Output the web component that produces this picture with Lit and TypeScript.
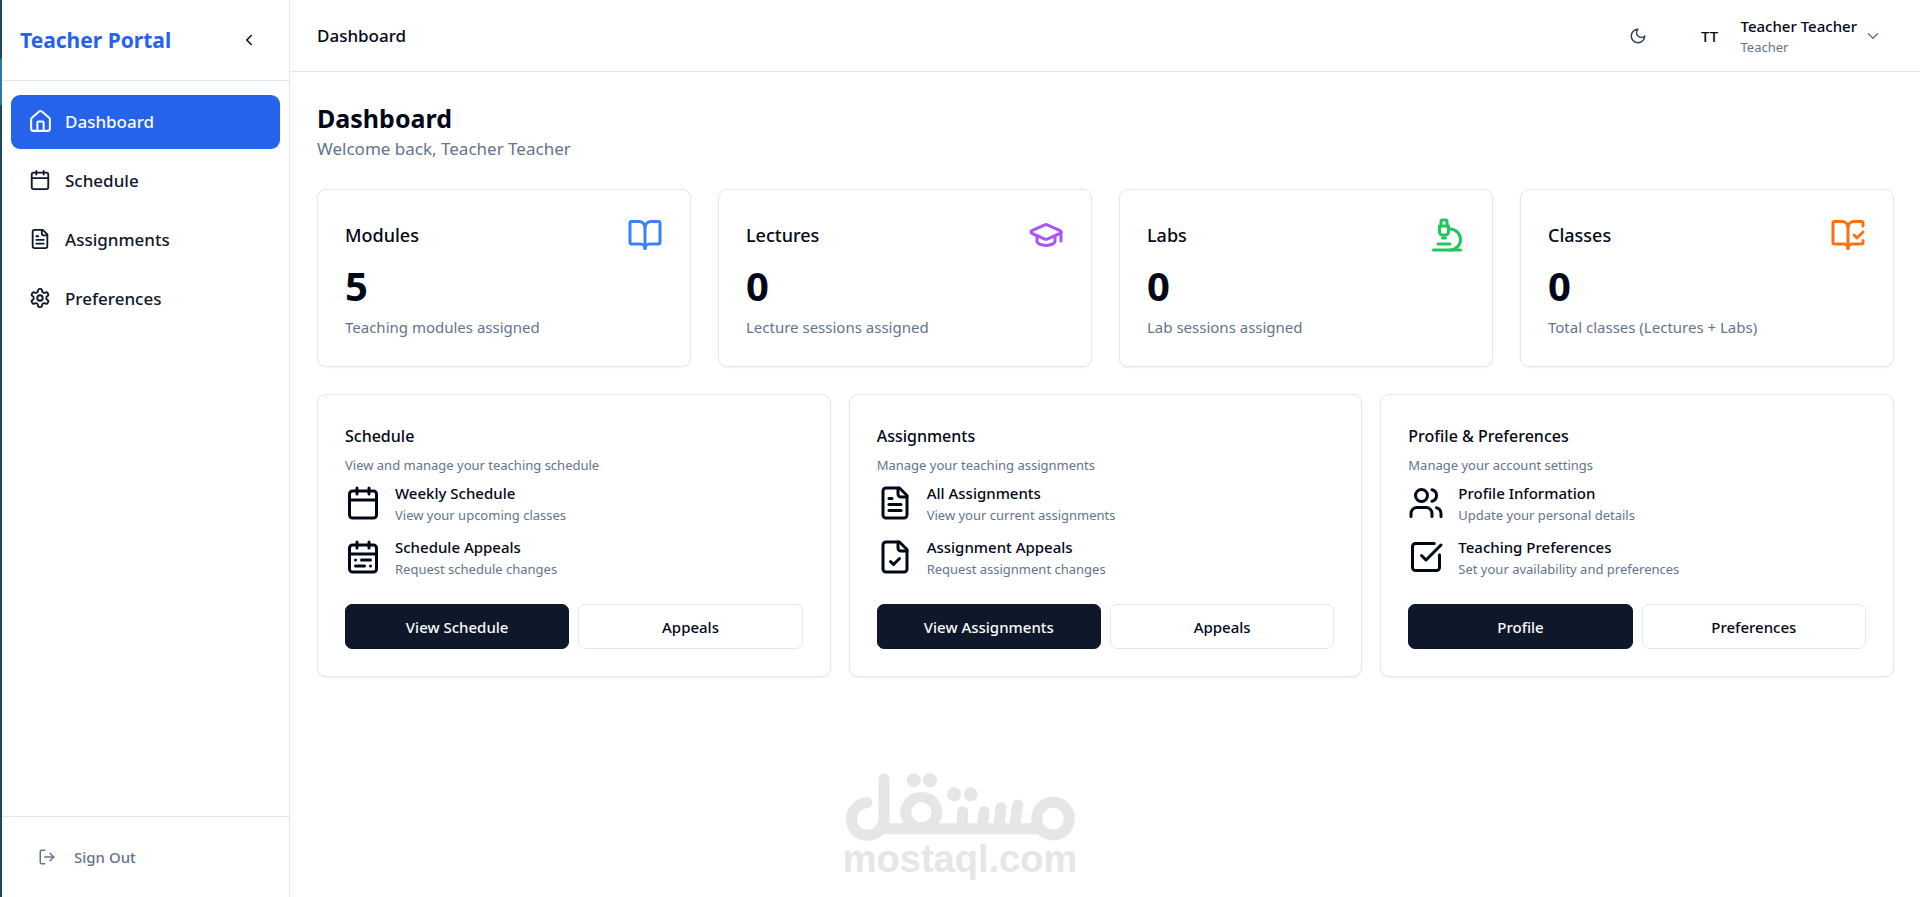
import { LitElement, html, css, svg, type TemplateResult } from "lit";
import { customElement, property } from "lit/decorators.js";
import { classMap } from "lit/directives/class-map.js";

const ICONS: Record<string, TemplateResult> = {
  home: svg`<path d="M15 21v-8a1 1 0 0 0-1-1h-4a1 1 0 0 0-1 1v8"/><path d="M3 10a2 2 0 0 1 .709-1.528l7-5.999a2 2 0 0 1 2.582 0l7 5.999A2 2 0 0 1 21 10v9a2 2 0 0 1-2 2H5a2 2 0 0 1-2-2z"/>`,
  calendar: svg`<path d="M8 2v4"/><path d="M16 2v4"/><rect width="18" height="18" x="3" y="4" rx="2"/><path d="M3 10h18"/>`,
  calendarRange: svg`<path d="M8 2v4"/><path d="M16 2v4"/><rect width="18" height="18" x="3" y="4" rx="2"/><path d="M3 10h18"/><path d="M17 14h-6"/><path d="M13 18H7"/><path d="M7 14h.01"/><path d="M17 18h.01"/>`,
  fileText: svg`<path d="M15 2H6a2 2 0 0 0-2 2v16a2 2 0 0 0 2 2h12a2 2 0 0 0 2-2V7Z"/><path d="M14 2v4a2 2 0 0 0 2 2h4"/><path d="M10 9H8"/><path d="M16 13H8"/><path d="M16 17H8"/>`,
  fileCheck: svg`<path d="M15 2H6a2 2 0 0 0-2 2v16a2 2 0 0 0 2 2h12a2 2 0 0 0 2-2V7Z"/><path d="M14 2v4a2 2 0 0 0 2 2h4"/><path d="m9 15 2 2 4-4"/>`,
  settings: svg`<path d="M12.22 2h-.44a2 2 0 0 0-2 2v.18a2 2 0 0 1-1 1.73l-.43.25a2 2 0 0 1-2 0l-.15-.08a2 2 0 0 0-2.73.73l-.22.38a2 2 0 0 0 .73 2.73l.15.1a2 2 0 0 1 1 1.72v.51a2 2 0 0 1-1 1.74l-.15.09a2 2 0 0 0-.73 2.73l.22.38a2 2 0 0 0 2.73.73l.15-.08a2 2 0 0 1 2 0l.43.25a2 2 0 0 1 1 1.73V20a2 2 0 0 0 2 2h.44a2 2 0 0 0 2-2v-.18a2 2 0 0 1 1-1.73l.43-.25a2 2 0 0 1 2 0l.15.08a2 2 0 0 0 2.73-.73l.22-.39a2 2 0 0 0-.73-2.73l-.15-.08a2 2 0 0 1-1-1.74v-.5a2 2 0 0 1 1-1.74l.15-.09a2 2 0 0 0 .73-2.73l-.22-.38a2 2 0 0 0-2.73-.73l-.15.08a2 2 0 0 1-2 0l-.43-.25a2 2 0 0 1-1-1.73V4a2 2 0 0 0-2-2z"/><circle cx="12" cy="12" r="3"/>`,
  signOut: svg`<path d="M9 21H5a2 2 0 0 1-2-2V5a2 2 0 0 1 2-2h4"/><path d="m16 17 5-5-5-5"/><path d="M21 12H9"/>`,
  chevronLeft: svg`<path d="m15 18-6-6 6-6"/>`,
  chevronDown: svg`<path d="m6 9 6 6 6-6"/>`,
  moon: svg`<path d="M12 3a6 6 0 0 0 9 9 9 9 0 1 1-9-9Z"/>`,
  book: svg`<path d="M12 7v14"/><path d="M3 18a1 1 0 0 1-1-1V4a1 1 0 0 1 1-1h5a4 4 0 0 1 4 4 4 4 0 0 1 4-4h5a1 1 0 0 1 1 1v13a1 1 0 0 1-1 1h-6a3 3 0 0 0-3 3 3 3 0 0 0-3-3z"/>`,
  graduation: svg`<path d="M21.42 10.922a1 1 0 0 0-.019-1.838L12.83 5.18a2 2 0 0 0-1.66 0L2.6 9.08a1 1 0 0 0 0 1.832l8.57 3.908a2 2 0 0 0 1.66 0z"/><path d="M22 10v6"/><path d="M6 12.5V16a6 3 0 0 0 12 0v-3.5"/>`,
  microscope: svg`<path d="M6 18h8"/><path d="M3 22h18"/><path d="M14 22a7 7 0 1 0 0-14h-1"/><path d="M9 14h2"/><path d="M9 12a2 2 0 0 1-2-2V6h6v4a2 2 0 0 1-2 2Z"/><path d="M12 6V3a1 1 0 0 0-1-1H9a1 1 0 0 0-1 1v3"/>`,
  bookCheck: svg`<path d="M12 21V7"/><path d="m16 12 2 2 4-4"/><path d="M22 6V4a1 1 0 0 0-1-1h-5a4 4 0 0 0-4 4 4 4 0 0 0-4-4H3a1 1 0 0 0-1 1v13a1 1 0 0 0 1 1h6a3 3 0 0 1 3 3 3 3 0 0 1 3-3h6a1 1 0 0 0 1-1v-1.3"/>`,
  users: svg`<path d="M16 21v-2a4 4 0 0 0-4-4H6a4 4 0 0 0-4 4v2"/><circle cx="9" cy="7" r="4"/><path d="M22 21v-2a4 4 0 0 0-3-3.87"/><path d="M16 3.13a4 4 0 0 1 0 7.75"/>`,
  squareCheck: svg`<path d="M21 10.5V19a2 2 0 0 1-2 2H5a2 2 0 0 1-2-2V5a2 2 0 0 1 2-2h12.5"/><path d="m9 11 3 3L22 4"/>`,
};

@customElement("line-icon")
class LineIcon extends LitElement {
  @property() name = "";

  static styles = css`
    :host { display: block; flex: none; width: 22px; height: 22px; }
    .glyph {
      display: block; width: 100%; height: 100%;
      fill: none; stroke: currentColor; stroke-width: 2;
      stroke-linecap: round; stroke-linejoin: round;
    }
  `;

  render() {
    return html`<svg class="glyph" viewBox="0 0 24 24" aria-hidden="true">${ICONS[this.name]}</svg>`;
  }
}

const NAV = [
  { icon: "home", label: "Dashboard", active: true },
  { icon: "calendar", label: "Schedule", active: false },
  { icon: "fileText", label: "Assignments", active: false },
  { icon: "settings", label: "Preferences", active: false },
];

const STATS = [
  { label: "Modules", value: 5, note: "Teaching modules assigned", icon: "book", tone: "blue" },
  { label: "Lectures", value: 0, note: "Lecture sessions assigned", icon: "graduation", tone: "purple" },
  { label: "Labs", value: 0, note: "Lab sessions assigned", icon: "microscope", tone: "green" },
  { label: "Classes", value: 0, note: "Total classes (Lectures + Labs)", icon: "bookCheck", tone: "orange" },
];

const PANELS = [
  {
    title: "Schedule", note: "View and manage your teaching schedule",
    items: [
      { icon: "calendar", title: "Weekly Schedule", note: "View your upcoming classes" },
      { icon: "calendarRange", title: "Schedule Appeals", note: "Request schedule changes" },
    ],
    primary: "View Schedule", secondary: "Appeals",
  },
  {
    title: "Assignments", note: "Manage your teaching assignments",
    items: [
      { icon: "fileText", title: "All Assignments", note: "View your current assignments" },
      { icon: "fileCheck", title: "Assignment Appeals", note: "Request assignment changes" },
    ],
    primary: "View Assignments", secondary: "Appeals",
  },
  {
    title: "Profile & Preferences", note: "Manage your account settings",
    items: [
      { icon: "users", title: "Profile Information", note: "Update your personal details" },
      { icon: "squareCheck", title: "Teaching Preferences", note: "Set your availability and preferences" },
    ],
    primary: "Profile", secondary: "Preferences",
  },
];

@customElement("app-root")
class AppRoot extends LitElement {
  static styles = css`
    :host {
      display: block;
      position: relative;
      font-family: "Noto Sans", "Open Sans", sans-serif;
      color: #020817;
      background: #fff;
    }
    * { box-sizing: border-box; }
    h1, h2, h3, p { margin: 0; }
    button { font: inherit; color: inherit; background: none; border: 0; padding: 0; cursor: pointer; }

    .shell { display: flex; min-height: 100vh; }
    .edge {
      flex: none; width: 2px;
      background: linear-gradient(#1f4a5a 0 59px, #2b7aa6 59px 105px, #1c4a58 105px);
    }

    .sidebar {
      flex: none; width: 288px;
      display: flex; flex-direction: column;
      border-right: 1px solid #e2e8f0;
    }
    .brand {
      display: flex; align-items: center; justify-content: space-between;
      height: 81px; padding: 0 18px;
      border-bottom: 1px solid #e2e8f0;
    }
    .brand-name { font-size: 21px; line-height: 32px; font-weight: 700; color: #2563eb; }
    .collapse { display: grid; place-items: center; width: 45px; height: 45px; color: #020817; }
    .nav { display: flex; flex-direction: column; gap: 5px; padding: 14px 9px; }
    .nav-link {
      display: flex; align-items: center; gap: 14px;
      height: 54px; padding: 0 18px 2px;
      border-radius: 9px;
      font-size: 17px; line-height: 27px; font-weight: 500;
      color: #0f172a; text-decoration: none;
    }
    .nav-link.active { background: #2563eb; color: #f8fafc; box-shadow: 0 1px 2px rgb(0 0 0 / 0.05); }
    .nav-icon { display: flex; align-items: center; justify-content: center; width: 22px; height: 22px; }
    .active line-icon { width: 25px; height: 25px; }
    .side-foot { margin-top: auto; padding: 17px 18px 18px; border-top: 1px solid #e2e8f0; }
    .sign-out {
      display: flex; align-items: center; gap: 18px;
      width: 100%; height: 45px; padding: 0 18px;
      font-size: 15px; font-weight: 500; color: #64748b;
    }
    .small { width: 18px; height: 18px; }

    .page { flex: 1; min-width: 0; }
    .topbar {
      display: flex; align-items: center; justify-content: space-between;
      height: 72px; padding: 0 38px 0 27px;
      border-bottom: 1px solid #e2e8f0;
    }
    .crumb { font-size: 17px; line-height: 27px; font-weight: 500; }
    .tools { display: flex; align-items: center; gap: 32px; }
    .theme { display: grid; place-items: center; width: 40px; height: 40px; color: #334155; }
    .account { display: flex; align-items: center; gap: 7px; text-align: left; }
    .avatar { display: grid; place-items: center; width: 40px; height: 40px; font-size: 15px; font-weight: 500; }
    .who { display: flex; flex-direction: column; padding-left: 4px; }
    .who-name { font-size: 15px; line-height: 22px; font-weight: 500; }
    .who-role { font-size: 13px; line-height: 20px; color: #64748b; }
    .chevron { width: 18px; height: 18px; color: #64748b; }

    .content { display: flex; flex-direction: column; gap: 27px; padding: 27px 26px 27px 27px; }
    .title { font-size: 25px; line-height: 38px; font-weight: 700; }
    .welcome { padding-bottom: 2px; font-size: 17px; line-height: 23px; color: #64748b; }

    .stats { display: grid; grid-template-columns: repeat(4, minmax(0, 1fr)); gap: 27px; }
    .card {
      padding: 27px;
      border: 1px solid #e2e8f0; border-radius: 9px;
      background: #fff; box-shadow: 0 1px 2px rgb(0 0 0 / 0.06);
    }
    .stat-head { display: flex; align-items: center; justify-content: space-between; height: 36px; }
    .stat-label { font-size: 18px; line-height: 28px; font-weight: 500; }
    .large { width: 36px; height: 36px; }
    .blue { color: #3b82f6; }
    .purple { color: #a855f7; }
    .green { color: #22c55e; }
    .orange { color: #f97316; }
    .stat-value { margin-top: 10px; font-size: 40px; line-height: 45px; font-weight: 700; }
    .stat-note { margin-top: 8px; font-size: 15px; line-height: 23px; color: #64748b; }

    .panels { display: grid; grid-template-columns: repeat(3, minmax(0, 1fr)); gap: 18px; }
    .panel-title { font-size: 16px; line-height: 28px; font-weight: 500; }
    .note { font-size: 13px; line-height: 22px; color: #64748b; }
    .panel-note { margin-top: 4px; }
    .items { display: flex; flex-direction: column; gap: 10px; margin: 6px 0 24px; padding: 0; list-style: none; }
    .item { display: flex; align-items: flex-start; gap: 14px; }
    .item .large { margin-top: 3px; }
    .item-title { font-size: 15px; line-height: 22px; font-weight: 500; }
    .actions { display: grid; grid-template-columns: 1fr 1fr; gap: 9px; }
    .btn {
      height: 45px; border-radius: 7px; border: 1px solid #e2e8f0;
      font-size: 15px; font-weight: 500; color: #020817; background: #fff;
    }
    .btn.primary { background: #0f172a; border-color: #0f172a; color: #f8fafc; }

    .watermark {
      position: absolute; left: 50%; bottom: 20px;
      width: 232px; margin-left: -116px;
      display: flex; flex-direction: column; align-items: center;
      color: #e6e6e6; pointer-events: none;
    }
    .mark { display: block; width: 230px; height: 68px; }
    .mark-stroke { fill: none; stroke: currentColor; stroke-width: 33; stroke-linecap: round; }
    .mark-fill { fill: currentColor; }
    .mark-text { font-family: "Liberation Sans", Arial, sans-serif; font-size: 38px; line-height: 36px; font-weight: 700; }
  `;

  render() {
    return html`
      <div class="shell">
        <div class="edge"></div>
        <aside class="sidebar">
          <div class="brand">
            <span class="brand-name">Teacher Portal</span>
            <button class="collapse" aria-label="Collapse sidebar"><line-icon class="small" name="chevronLeft"></line-icon></button>
          </div>
          <nav class="nav">
            ${NAV.map((n) => html`
              <a href="#" class=${classMap({ "nav-link": true, active: n.active })}>
                <span class="nav-icon"><line-icon name=${n.icon}></line-icon></span>${n.label}
              </a>`)}
          </nav>
          <div class="side-foot">
            <button class="sign-out"><line-icon class="small" name="signOut"></line-icon>Sign Out</button>
          </div>
        </aside>
        <div class="page">
          <header class="topbar">
            <span class="crumb">Dashboard</span>
            <div class="tools">
              <button class="theme" aria-label="Toggle theme"><line-icon class="small" name="moon"></line-icon></button>
              <button class="account">
                <span class="avatar">TT</span>
                <span class="who"><span class="who-name">Teacher Teacher</span><span class="who-role">Teacher</span></span>
                <line-icon class="chevron" name="chevronDown"></line-icon>
              </button>
            </div>
          </header>
          <main class="content">
            <div>
              <h1 class="title">Dashboard</h1>
              <p class="welcome">Welcome back, Teacher Teacher</p>
            </div>
            <section class="stats">
              ${STATS.map((s) => html`
                <article class="card">
                  <div class="stat-head">
                    <h2 class="stat-label">${s.label}</h2>
                    <line-icon class="large ${s.tone}" name=${s.icon}></line-icon>
                  </div>
                  <p class="stat-value">${s.value}</p>
                  <p class="stat-note">${s.note}</p>
                </article>`)}
            </section>
            <section class="panels">
              ${PANELS.map((p) => html`
                <article class="card">
                  <h2 class="panel-title">${p.title}</h2>
                  <p class="note panel-note">${p.note}</p>
                  <ul class="items">
                    ${p.items.map((i) => html`
                      <li class="item">
                        <line-icon class="large" name=${i.icon}></line-icon>
                        <div>
                          <h3 class="item-title">${i.title}</h3>
                          <p class="note">${i.note}</p>
                        </div>
                      </li>`)}
                  </ul>
                  <div class="actions">
                    <button class="btn primary">${p.primary}</button>
                    <button class="btn">${p.secondary}</button>
                  </div>
                </article>`)}
            </section>
          </main>
        </div>
      </div>
      <div class="watermark">
        <svg class="mark" viewBox="75 68 690 204" aria-hidden="true">
          <path class="mark-stroke" d="M141 157A49 49 0 1 0 192 205V85"/>
          <path class="mark-stroke" d="M180 235H650"/>
          <circle class="mark-stroke" cx="699" cy="205" r="49"/>
          <path class="mark-fill" fill-rule="evenodd" d="M304 125a61 61 0 0 1 53 94v10H251v-10a61 61 0 0 1 53-94zm0 31a30 30 0 1 0 .1 0z"/>
          <circle class="mark-fill" cx="281" cy="90" r="21"/>
          <circle class="mark-fill" cx="330" cy="90" r="21"/>
          <circle class="mark-fill" cx="402" cy="132" r="21"/>
          <circle class="mark-fill" cx="452" cy="132" r="21"/>
          <path class="mark-stroke" d="M428 184 426 230M492 184 487 230M543 172 536 230M593 164 584 230"/>
        </svg>
        <span class="mark-text">mostaql.com</span>
      </div>
    `;
  }
}
